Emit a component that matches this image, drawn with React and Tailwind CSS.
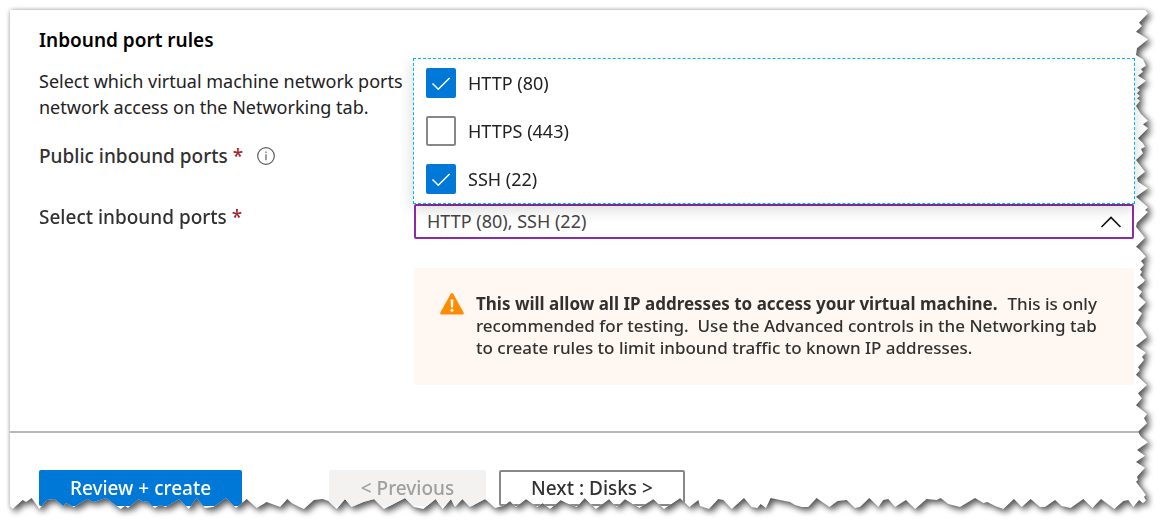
import { useState } from "react";

// Outline of the torn paper edge, in thirds of a pixel.
// Each pair is [distance along the edge, coordinate across it].
const RIGHT_A = [[30,437],[40,445],[68,418],[78,428],[95,408],[108,430],[118,444],[145,412],[165,408],[178,430],[197,440],[207,424],[215,430],[227,416],[242,438],[263,411],[270,420],[280,411],[288,420],[295,411],[302,422],[318,409],[342,424],[362,444],[373,430],[385,444],[415,414],[430,430],[440,435],[447,424],[460,430],[480,409],[515,437],[535,412],[545,414],[565,444],[590,409],[622,444],[630,436],[636,444],[668,412],[680,409],[713,437],[740,409]];
const RIGHT_B = [[0,420],[20,440],[33,424],[45,432],[58,421],[65,428],[75,420],[90,436],[98,430],[112,411],[125,428],[138,418],[157,440],[180,416],[190,428],[200,420],[220,409],[235,425],[262,443],[287,410],[308,440],[320,428],[330,432],[352,415],[360,422],[374,409],[405,441],[430,415],[445,428],[466,409],[492,441],[505,432],[520,443],[545,414],[560,425],[577,444],[600,411],[617,437],[636,409],[653,437],[680,412],[690,415],[695,409],[735,440],[740,432],[752,438],[759,430]];
const BOTTOM_A = [[38,267],[68,240],[78,245],[95,235],[118,267],[140,240],[165,237],[190,257],[198,250],[222,262],[262,238],[280,245],[318,235],[362,267],[375,258],[384,265],[417,237],[430,245],[440,242],[464,265],[480,255],[497,262],[538,236],[566,267],[590,235],[615,265],[640,262],[678,235],[708,265],[740,236],[770,265],[800,245],[840,260],[862,238],[875,250],[898,260]];
const BOTTOM_B = [[12,267],[42,240],[68,236],[85,243],[110,267],[135,238],[155,262],[190,245],[222,236],[252,267],[315,235],[342,262],[370,267],[407,237],[428,267],[453,237],[465,262],[487,237],[510,262],[555,236],[585,265],[610,258],[630,242],[648,262],[678,238],[712,262],[728,250],[750,267],[782,240],[800,248],[830,262],[854,235],[888,267],[927,237],[950,260],[975,238],[1018,265],[1060,236],[1092,267],[1140,235],[1168,262],[1195,240]];
const BOTTOM_C = [[0,258],[27,267],[55,237],[70,240],[95,267],[132,235],[155,262],[172,265],[182,253],[198,263],[212,235],[240,240],[270,245],[285,255],[305,262],[325,262],[350,235],[388,262],[413,242],[440,240],[465,265],[480,262],[508,235],[535,262],[550,240],[565,236],[585,262],[618,240],[645,267],[680,236],[710,240],[722,235],[745,252],[780,260],[825,235],[850,250],[862,245],[885,258],[910,267],[942,238],[965,262],[992,238],[1020,262],[1035,262],[1065,240],[1085,258],[1112,265],[1150,238],[1177,265],[1203,238],[1243,267],[1270,242],[1285,240],[1300,262],[1317,240],[1332,252]];

const segment = (points, shift, edge) =>
  points.map(([along, across]) => [along + shift, Math.round((edge - across) / 3)]);

const right = [...segment(RIGHT_A, -30, 445), ...segment(RIGHT_B, 720, 445)];
const bottom = [
  ...segment(BOTTOM_A, -30, 267),
  ...segment(BOTTOM_B, 870, 267),
  ...segment(BOTTOM_C, 2070, 267),
];

const tornEdge = `polygon(${[
  "0 0",
  ...right.map(([a, d]) => `calc(100% - ${d}px) ${((a / 1497) * 100).toFixed(2)}%`),
  ...bottom.reverse().map(([a, d]) => `${((a / 3414) * 100).toFixed(2)}% calc(100% - ${d}px)`),
  "0 calc(100% - 3px)",
].join(",")})`;

const PORTS = ["HTTP (80)", "HTTPS (443)", "SSH (22)"];

function PortOption({ name, checked, onChange }) {
  return (
    <label className="flex items-center gap-3 text-[18px] leading-[30px] text-[#222]">
      <span className="grid size-[30px] place-items-center">
        <input
          type="checkbox"
          checked={checked}
          onChange={onChange}
          className="col-start-1 row-start-1 size-[30px] appearance-none rounded-xs border-2 border-[#8a8886] bg-white checked:border-[#0078d7] checked:bg-[#0078d7]"
        />
        {checked && (
          <svg viewBox="0 0 30 30" className="pointer-events-none col-start-1 row-start-1 size-[30px]" fill="none" stroke="#fff" strokeWidth="1.5">
            <path d="M6.5 15.5l5.8 5.8L23.6 10" />
          </svg>
        )}
      </span>
      {name}
    </label>
  );
}

function Required() {
  return <span className="text-[#a4262c]">*</span>;
}

export default function App() {
  const [selected, setSelected] = useState(["HTTP (80)", "SSH (22)"]);
  const toggle = (name) =>
    setSelected(PORTS.filter((p) => (p === name ? !selected.includes(p) : selected.includes(p))));

  return (
    <div className="bg-white pt-[10px] pr-[17px] pb-[17px] pl-[10px] font-['Noto_Sans','Open_Sans',sans-serif]">
      <div className="drop-shadow-[0_0_2px_rgba(0,0,0,0.25)]">
        <div className="drop-shadow-[3px_3px_3px_rgba(0,0,0,0.6)]">
          <main className="bg-white pb-[3px]" style={{ clipPath: tornEdge }}>
            <div className="pt-[17px] pr-[14px] pl-[29px]">
              <h1 className="text-[19px] leading-[26px] font-semibold text-black">Inbound port rules</h1>
              <p className="mt-[15px] text-[18px] leading-[26px] text-[#222]">
                Select which virtual machine network ports
                <br />
                network access on the Networking tab.
              </p>
              <div className="mt-[23px] flex items-center text-[19px] leading-[26px] font-medium text-[#323130]">
                <span>
                  Public inbound ports <Required />
                </span>
                <button type="button" aria-label="About public inbound ports" className="ml-[14px]">
                  <svg viewBox="0 0 18 18" className="size-[18px]" fill="none" stroke="#605e5c" strokeWidth="1.2">
                    <circle cx="9" cy="9" r="8.3" />
                    <path d="M9 7.2v6M9 4.6v1.3" />
                  </svg>
                </button>
              </div>
              <div className="mt-[35px] grid grid-cols-[375px_1fr]">
                <label htmlFor="ports" className="text-[19px] leading-[26px] font-medium text-[#323130]">
                  Select inbound ports <Required />
                </label>
                <div className="relative">
                  <button
                    id="ports"
                    type="button"
                    aria-haspopup="listbox"
                    aria-expanded="true"
                    className="flex h-[35px] w-full items-center justify-between rounded-xs border-2 border-[#8a2da5] bg-white pr-[10px] pl-[11px] text-[18px] text-[#444]"
                  >
                    {selected.join(", ")}
                    <svg viewBox="0 0 22 14" className="h-[14px] w-[22px]" fill="none" stroke="#111" strokeWidth="1.6">
                      <path d="M1.5 12L11 2.5L20.500 12" />
                    </svg>
                  </button>
                  <div className="absolute -inset-x-px bottom-full flex flex-col gap-[18px] border border-dashed border-[#00b7f0] bg-white px-3 py-[9px] shadow-[0_5px_14px_rgba(0,0,0,0.16)]">
                    {PORTS.map((p) => (
                      <PortOption key={p} name={p} checked={selected.includes(p)} onChange={() => toggle(p)} />
                    ))}
                  </div>
                </div>
                <div className="col-start-2 mt-[29px] flex items-start gap-3 rounded-xs bg-[#fff7f1] px-[26px] pt-[25px] pb-[26px]">
                  <svg viewBox="0 0 24 22" className="h-[22px] w-6 shrink-0">
                    <path d="M10.600 1Q12-.9 13.400 1L23.600 19.600Q24.300 21.600 22.500 21.600H1.500Q-.3 21.600.4 19.600Z" fill="#ff8c00" />
                    <path d="M10.600 6.500h2.800l-.4 8h-2z" fill="#fff" />
                    <circle cx="12" cy="17.300" r="1.500" fill="#fff" />
                  </svg>
                  <div className="text-[17px] leading-[22px] font-medium text-[#323130]">
                    <div className="flex flex-wrap gap-x-[10px]">
                      <strong className="font-bold">This will allow all IP addresses to access your virtual machine.</strong>
                      <span>This is only</span>
                    </div>
                    <p>
                      recommended for testing.&nbsp; Use the Advanced controls in the Networking tab
                      <br />
                      to create rules to limit inbound traffic to known IP addresses.
                    </p>
                  </div>
                </div>
              </div>
            </div>
            <footer className="mt-[46px] flex border-t-2 border-[#b8b8b8] pt-[37px] pl-[29px] text-[19px] font-medium">
              <button type="button" className="h-9 w-[203px] rounded-xs bg-[#0078d7] text-white">
                Review + create
              </button>
              <button type="button" disabled className="ml-[87px] h-9 w-[157px] rounded-xs bg-[#f3f2f1] text-[#a19f9d]">
                &lt; Previous
              </button>
              <button type="button" className="ml-[13px] h-9 w-[186px] rounded-xs border-2 border-[#8a8886] bg-white text-[#323130]">
                Next : Disks &gt;
              </button>
            </footer>
          </main>
        </div>
      </div>
    </div>
  );
}
